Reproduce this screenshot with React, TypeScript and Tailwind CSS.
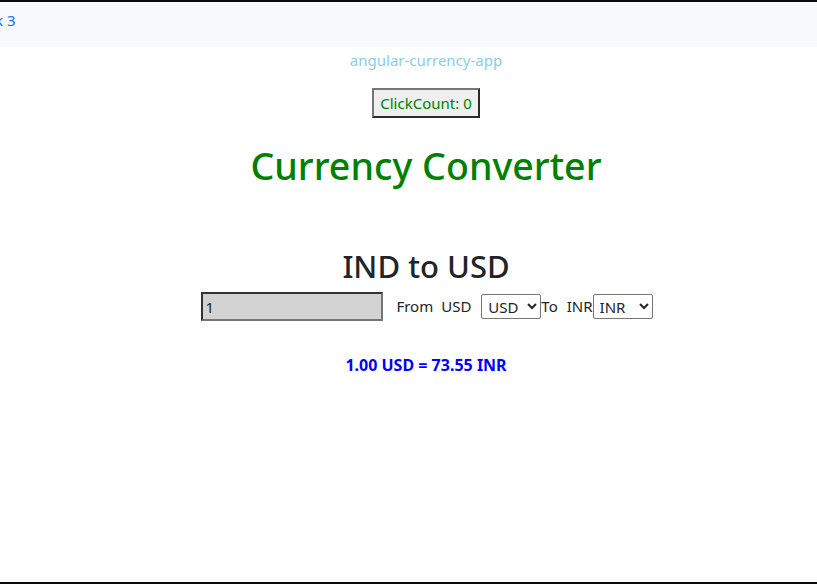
import { useState } from "react";

export default function App() {
  const [count, setCount] = useState(0);
  const [amount, setAmount] = useState("1");
  const [from, setFrom] = useState("USD");
  const [to, setTo] = useState("INR");

  const rate = 73.55;
  const value = (parseFloat(amount) || 0).toFixed(2);

  return (
    <div
      className="h-[584px] w-[817px] overflow-hidden border-y-2 border-[#0a0a0a] bg-white text-[#212529]"
      style={{ fontFamily: '"Noto Sans", "Open Sans", sans-serif' }}
    >
      <nav className="flex h-[45px] items-start overflow-hidden bg-[#f8f9fa] pt-[6px]">
        <a className="-ml-[26px] text-[15px] leading-[24px] text-[#0d6efd]">Link 3</a>
      </nav>

      <div className="flex flex-col items-center pl-[35px]">
        <div className="mt-[1px] text-[15px] leading-[24px] text-[#87ceeb]">angular-currency-app</div>

        <button
          onClick={() => setCount(count + 1)}
          className="mt-[16px] h-[30px] border-2 border-t-[#767676] border-l-[#767676] border-r-[#2b2b2b] border-b-[#2b2b2b] bg-[#efefef] px-[6px] text-[15px] text-[#008000]"
        >
          ClickCount: {count}
        </button>

        <h1 className="mt-[25px] text-[37.6px] font-medium leading-[46px] text-[#008000]">Currency Converter</h1>

        <h2 className="mt-[58px] text-[31px] font-medium leading-[38px]">IND to USD</h2>

        <div className="mt-[7px] ml-[2px] flex items-center text-[15px]">
          <input
            value={amount}
            onChange={(e) => setAmount(e.target.value)}
            className="h-[29px] w-[182px] border-2 border-t-[#333] border-l-[#333] border-r-[#767676] border-b-[#767676] bg-[#d3d3d3] px-[2px] text-[15px] text-[#212529] outline-none"
          />
          <span className="ml-[13px]">From</span>
          <span className="ml-[8px]">USD</span>
          <select
            value={from}
            onChange={(e) => setFrom(e.target.value)}
            className="ml-[10px] h-[25px] w-[60px] rounded-[2px] border border-[#767676] bg-white px-[2px] text-[15px]"
          >
            <option>USD</option>
            <option>INR</option>
          </select>
          <span>To</span>
          <span className="ml-[9px]">INR</span>
          <select
            value={to}
            onChange={(e) => setTo(e.target.value)}
            className="h-[25px] w-[60px] rounded-[2px] border border-[#767676] bg-white px-[2px] text-[15px]"
          >
            <option>INR</option>
            <option>USD</option>
          </select>
        </div>

        <div className="mt-[32px] text-[16px] font-bold text-[#0000ff]">
          {value} {from} = {(parseFloat(value) * rate).toFixed(2)} {to}
        </div>
      </div>
    </div>
  );
}
